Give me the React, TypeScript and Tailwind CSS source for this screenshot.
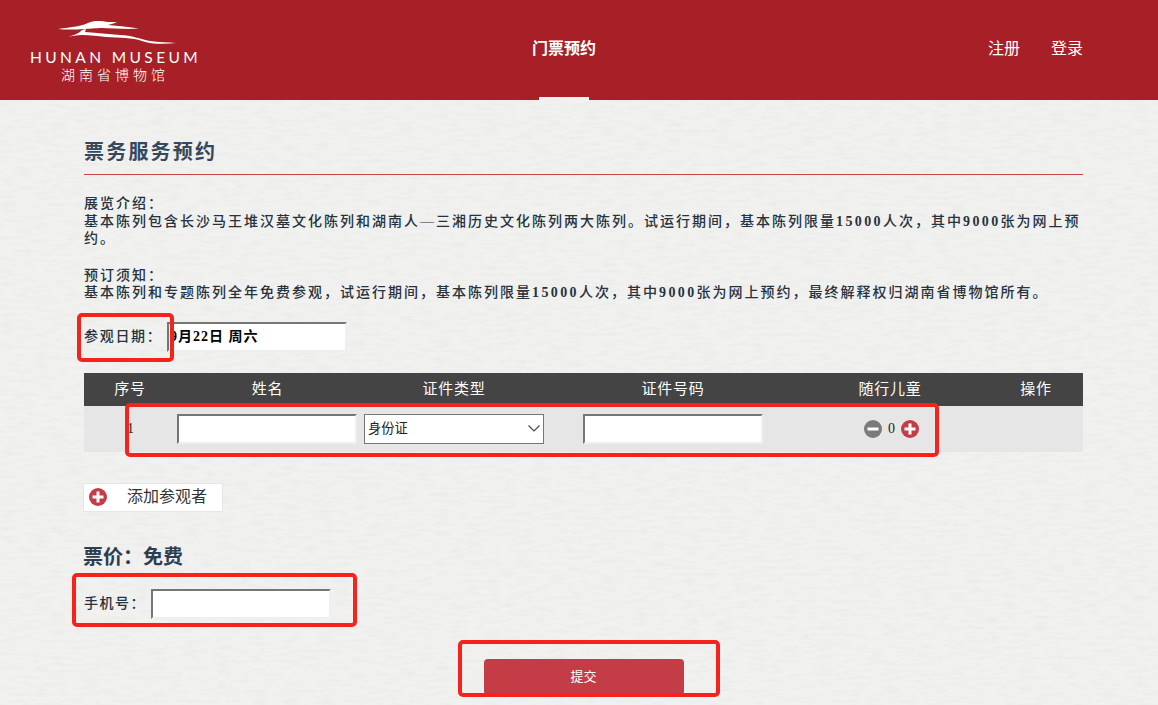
const serif = "font-['Liberation_Serif','Noto_Sans_CJK_SC',serif]";
const sans = "font-['Liberation_Sans','Noto_Sans_CJK_SC',sans-serif]";

const textInput =
  "h-[30px] w-[180px] border-2 border-t-[#767676] border-l-[#767676] border-r-[#efefef] border-b-[#efefef] bg-white";

const tableCols = "grid-cols-[92px_183px_190px_248px_186px_100px]";

function RoundIcon({ type, size }: { type: "plus" | "minus"; size: number }) {
  return (
    <svg width={size} height={size} viewBox="0 0 18 18" className="shrink-0">
      <circle cx="9" cy="9" r="9" fill={type === "plus" ? "#c43d46" : "#7a7a7a"} />
      <rect x="3.5" y="7.5" width="11" height="3" fill="#fff" />
      {type === "plus" && <rect x="7.5" y="3.5" width="3" height="11" fill="#fff" />}
    </svg>
  );
}

function Logo() {
  return (
    <div className="flex w-[168px] flex-col">
      <svg width="118" height="25" viewBox="0 0 118 25" className="ml-[28px]">
        <path
          d="M0 9 C14 7 24 6 30 3 C36 0 44 1 50 2 L59 2 C55 4 52 4 50 5 C60 6 72 7 81 8.5 C70 9.5 55 8.5 44 8 C38 8 30 9 26 9 C18 9.5 8 10 0 9 Z"
          fill="#fff"
        />
        <path
          d="M10 17 C16 15 22 13 24 10 L28 9 L27 12 C40 13 50 14 62 15 C74 15.5 82 19 92 21 C100 22.5 110 22 118 23 C106 24.5 92 24 84 21 C74 17.5 62 18 48 17 C40 16 32 15 24 15 C18 15 14 16 10 17 Z"
          fill="#fff"
        />
      </svg>
      <div className="mt-[3px] font-['Lato',sans-serif] text-[15.5px] leading-[18px] font-normal tracking-[3.4px] whitespace-nowrap text-white">
        HUNAN MUSEUM
      </div>
      <div className="ml-[31px] font-['Noto_Sans_CJK_SC',sans-serif] text-[14px] leading-[16px] font-light tracking-[4px] whitespace-nowrap text-white">
        湖南省博物馆
      </div>
    </div>
  );
}

function Annotation({ className }: { className: string }) {
  return <div className={`pointer-events-none absolute rounded-[5px] border-[4px] border-[#f5231c] ${className}`} />;
}

// faint paper fibres behind the page
function PaperTexture() {
  return (
    <svg className="absolute inset-0 h-full w-full" aria-hidden="true">
      <filter id="paper">
        <feTurbulence type="fractalNoise" baseFrequency="0.06 0.3" numOctaves="3" seed="7" />
        <feColorMatrix values="0 0 0 0 0.5  0 0 0 0 0.5  0 0 0 0 0.5  0 0 0 0.24 -0.1" />
      </filter>
      <rect width="100%" height="100%" filter="url(#paper)" />
    </svg>
  );
}

export default function App() {
  return (
    <div className={`relative h-[705px] w-[1158px] overflow-hidden bg-[#f1f1f0] ${serif}`}>
      <PaperTexture />

      {/* Header */}
      <header className="relative flex h-[100px] items-start bg-[#a72027] text-white">
        <div className="mt-[20px] ml-[30px]">
          <Logo />
        </div>
        <nav className="relative ml-[334px] flex h-[100px] w-[64px] justify-center">
          <a className="mt-[39px] text-[16px] leading-[20px] font-bold whitespace-nowrap">门票预约</a>
          <span className="absolute bottom-0 left-[7px] h-[3px] w-[50px] bg-[#f1f1f0]" />
        </nav>
        <div className="mt-[39px] mr-[75px] ml-auto flex gap-[31px] text-[16px] leading-[20px]">
          <a>注册</a>
          <a>登录</a>
        </div>
      </header>

      {/* Form */}
      <main className="relative mx-[84px] w-[999px] text-[#2c3e50]">
        <h1 className="mt-[39px] border-b border-[#c4474f] pb-[9px] text-[20px] leading-[26px] font-semibold tracking-[2.2px] text-[#34495e]">
          票务服务预约
        </h1>

        <section className="mt-[20px] text-[14px] leading-[17.5px] font-medium tracking-[2px] text-[#26323d]">
          <p>展览介绍：</p>
          <p>
            基本陈列包含长沙马王堆汉墓文化陈列和湖南人—三湘历史文化陈列两大陈列。试运行期间，基本陈列限量
            <span className="font-bold tracking-[2.4px]">15000</span>人次，其中<span className="font-bold tracking-[2.4px]">9000</span>
            张为网上预
            <br />
            约。
          </p>
          <p className="mt-[19px]">预订须知：</p>
          <p>
            基本陈列和专题陈列全年免费参观，试运行期间，基本陈列限量
            <span className="font-bold tracking-[2.4px]">15000</span>人次，其中<span className="font-bold tracking-[2.4px]">9000</span>
            张为网上预约，最终解释权归湖南省博物馆所有。
          </p>
        </section>

        <div className="mt-[20px] flex h-[30px] items-center text-[14px] font-medium tracking-[1.7px] text-[#26323d]">
          <label className="w-[83px]">参观日期：</label>
          <div className={`${textInput} flex items-center overflow-hidden`}>
            <span className="ml-[1px] text-[14px] font-bold tracking-[1px] whitespace-nowrap text-black">9月22日 周六</span>
          </div>
        </div>

        <div className="mt-[21px]">
          <div className={`grid h-[33px] ${tableCols} items-center bg-[#444444] text-center text-[15px] tracking-[0.8px] text-white`}>
            <div>序号</div>
            <div>姓名</div>
            <div>证件类型</div>
            <div>证件号码</div>
            <div>随行儿童</div>
            <div className="pl-[6px]">操作</div>
          </div>
          <div className={`grid h-[46px] ${tableCols} items-center bg-[#e6e6e6] text-center text-[14px] text-[#222]`}>
            <div className="pl-[1px]">1</div>
            <div className="flex justify-center pr-[2px]">
              <div className={textInput} />
            </div>
            <div className="flex justify-center">
              <div className={`flex h-[30px] w-[180px] items-center justify-between border border-[#767676] bg-white px-[3px] text-[13.3px] text-[#222] ${sans}`}>
                <span>身份证</span>
                <svg width="12" height="7" viewBox="0 0 12 7" fill="none" stroke="#444" strokeWidth="1.1">
                  <polyline points="0.5,0.5 6,6 11.5,0.5" />
                </svg>
              </div>
            </div>
            <div className="flex justify-center">
              <div className={textInput} />
            </div>
            <div className="flex items-center justify-center gap-[6px] pl-[3px]">
              <RoundIcon type="minus" size={18} />
              <span>0</span>
              <RoundIcon type="plus" size={18} />
            </div>
            <div />
          </div>
        </div>

        <button className="mt-[31px] ml-[-1px] flex h-[29px] w-[140px] items-center border border-[#e6e6e6] bg-white pl-[5px] text-[16px] text-[#333]">
          <RoundIcon type="plus" size={18} />
          <span className={`ml-[20px] ${sans}`}>添加参观者</span>
        </button>

        <h2 className={`mt-[30px] ml-[-1px] text-[20px] leading-[30px] font-bold text-[#2c3e50] ${sans}`}>票价：免费</h2>

        <div className="mt-[17px] flex h-[30px] items-center text-[14px] font-medium tracking-[1.5px] text-[#26323d]">
          <label className="w-[67px]">手机号：</label>
          <div className={textInput} />
        </div>

        <div className="mt-[40px] flex justify-center">
          <button className={`h-[36px] w-[200px] rounded-[4px] bg-[#c43d46] text-[13px] text-white ${sans}`}>提交</button>
        </div>
      </main>

      {/* Red marks drawn over the screenshot */}
      <Annotation className="top-[313px] left-[77px] h-[49px] w-[97px]" />
      <Annotation className="top-[403px] left-[125px] h-[54px] w-[814px]" />
      <Annotation className="top-[573px] left-[72px] h-[54px] w-[285px]" />
      <Annotation className="top-[640px] left-[458px] h-[57px] w-[262px]" />
    </div>
  );
}
